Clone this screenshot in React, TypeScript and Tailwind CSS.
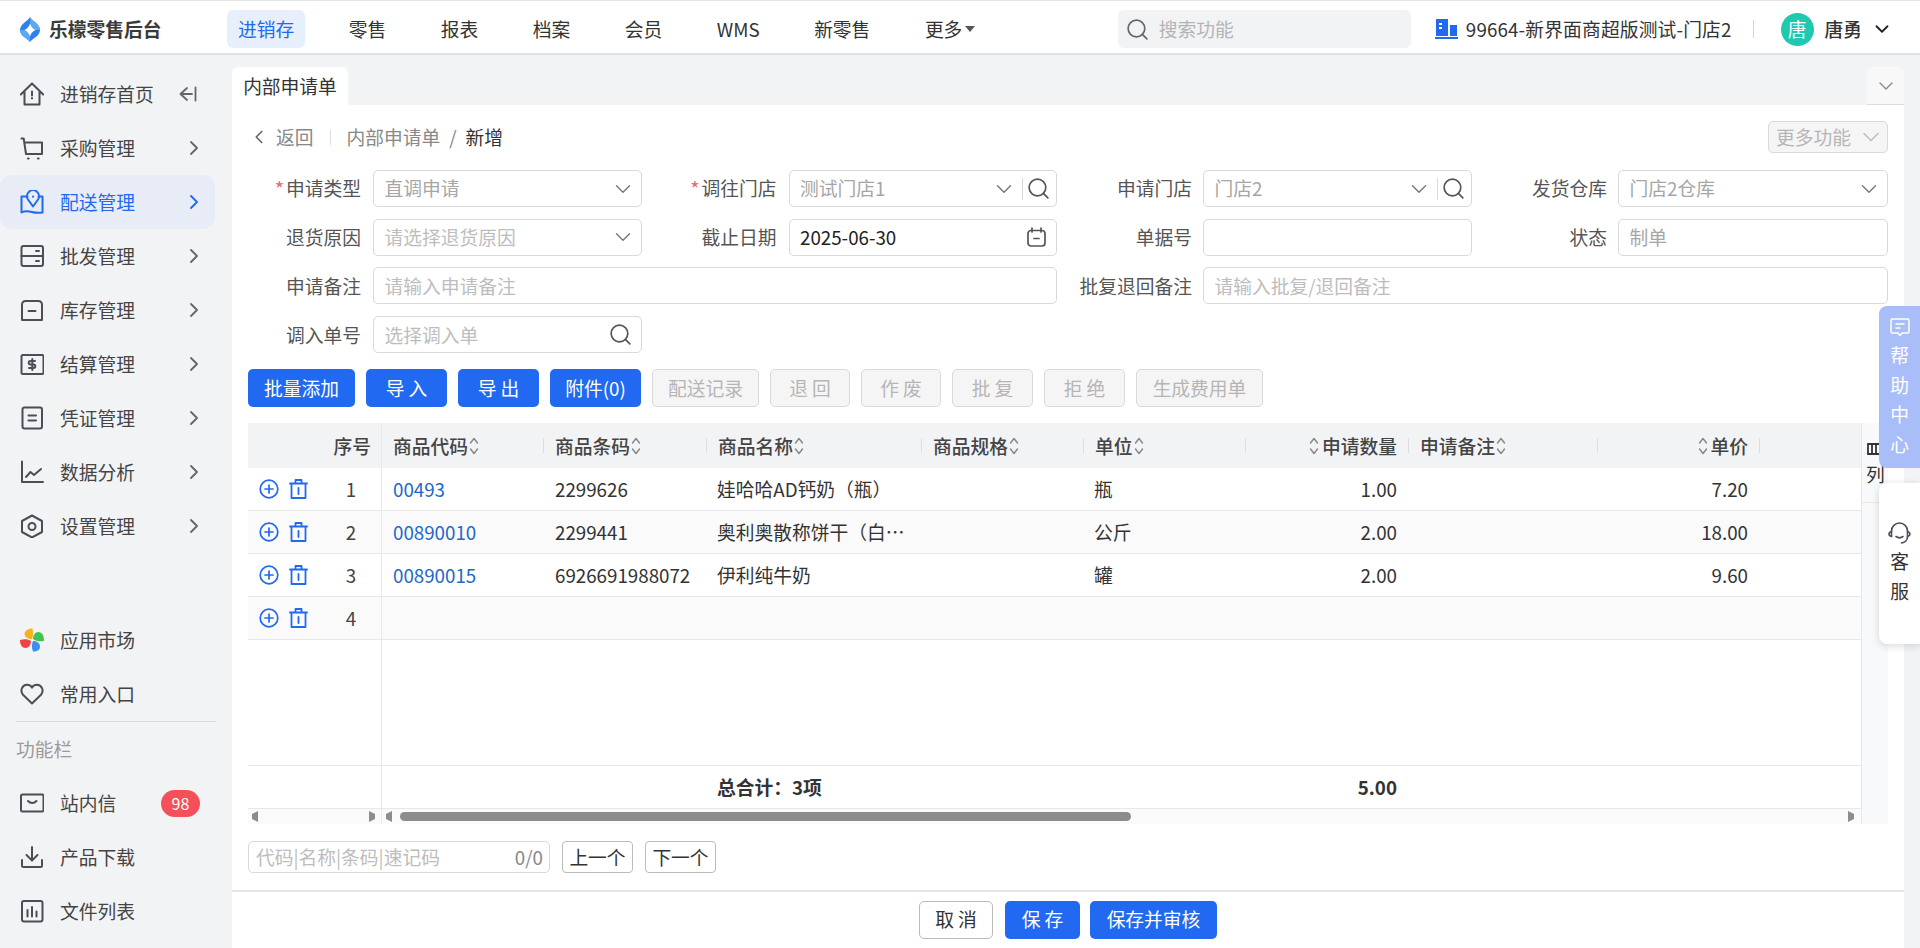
import type { ReactNode } from "react";
import { ChevronDown, ChevronRight, ChevronLeft, Search } from "lucide-react";

const BLUE = "#2169f0";

function Ico({ children, size = 24, color = "#4b4e57", width = 2 }: { children: ReactNode; size?: number; color?: string; width?: number }) {
  return (
    <svg width={size} height={size} viewBox="0 0 24 24" fill="none" stroke={color} strokeWidth={width} strokeLinecap="round" strokeLinejoin="round" className="shrink-0">
      {children}
    </svg>
  );
}

const HomeIcon = () => (
  <Ico>
    <path d="M.8 12.500 12 1.500l11.200 11M4.500 9.500v13h15v-13" />
    <path d="M12 9.500v4M12 16v.4" />
  </Ico>
);
const CartIcon = () => (
  <Ico>
    <path d="M1.500 2.500h2.200L6 18h16V6.500H5" />
    <path d="M8 22.500h.6M18 22.500h.6" strokeWidth={2.200} />
  </Ico>
);
const MapIcon = () => (
  <Ico color={BLUE}>
    <path d="M7.500 6.500H1.500v16c3-1.800 6-1.800 10.500-.5s7.500 1 10.500.5v-16h-4" />
    <path d="M13 16.500 8 9.500a6 6 0 1 1 10 0z" />
    <path d="M13 6.500v.3" />
  </Ico>
);
const WholesaleIcon = () => (
  <Ico>
    <rect x="1.500" y="2" width="21.500" height="20" rx="2" />
    <path d="M1.500 12h21.500M16 7h3M16 17h3" />
  </Ico>
);
const StockIcon = () => (
  <Ico>
    <path d="M2 22V6.500A3.500 3.500 0 0 1 5.500 3h13A3.500 3.500 0 0 1 22 6.500V22z" />
    <path d="M8.500 13h7" />
  </Ico>
);
const SettleIcon = () => (
  <Ico>
    <rect x="1.500" y="3" width="22" height="19" rx="1.500" />
    <path d="M15 9h-4.500a1.700 1.700 0 0 0 0 3.500h3a1.700 1.700 0 0 1 0 3.500H9M12.300 7v11" />
  </Ico>
);
const VoucherIcon = () => (
  <Ico>
    <rect x="2.500" y="1.500" width="19.500" height="21" rx="2" />
    <path d="M8.500 9.500h7.500M8.500 14.500h7.500" />
  </Ico>
);
const ChartIcon = () => (
  <Ico>
    <path d="M2 1.500V22h21" />
    <path d="M6 17l4.500-5 3.500 3 7-6" />
  </Ico>
);
const GearIcon = () => (
  <Ico>
    <path d="M12 1.500 22 7v11l-10 5.500L2 18V7z" />
    <circle cx="12" cy="12.500" r="3.500" />
  </Ico>
);
const HeartIcon = () => (
  <Ico>
    <path d="M12 21.500 3 12.800C-.5 8.500 2.500 2.800 7 2.800c2.200 0 3.900 1 5 2.800 1.100-1.800 2.800-2.800 5-2.800 4.500 0 7.500 5.700 4 10z" />
  </Ico>
);
const MailIcon = () => (
  <Ico>
    <rect x="1" y="3.500" width="22.500" height="17" rx="1.500" />
    <path d="M8 10c2.500 2.500 6 2.500 8.500 0" />
  </Ico>
);
const DownloadIcon = () => (
  <Ico>
    <path d="M12 2v13M6.500 10l5.500 5.500 5.500-5.500M2 15v5.500a1.500 1.500 0 0 0 1.500 1.500h17a1.500 1.500 0 0 0 1.500-1.500V15" />
  </Ico>
);
const FileIcon = () => (
  <Ico>
    <rect x="2" y="2" width="20.500" height="20.500" rx="2" />
    <path d="M7.500 11v6.500M12 8v9.500M16.500 12.500v5" />
  </Ico>
);

function AppMarketIcon() {
  return (
    <svg width="24" height="24" viewBox="0 0 24 24" className="shrink-0">
      <path d="M12 11C8 11 4.500 9 4.500 6c0-3 3-5.500 8-5.500C13 4 13.500 8 12 11z" fill="#f7b21b" />
      <path d="M13 11c0-3.500 2-7 5.500-7 3.500 0 5.500 3.500 5.500 9-4 .5-8 .5-11-2z" fill="#3fc352" />
      <path d="M13 13c3.500 0 7 2 7 5.500S17.500 23.500 13 23.500c-1.500-3.500-1.500-7.500 0-10.500z" fill="#3d8df5" />
      <path d="M11 13c0 3.500-2 7-5.500 7C2 20 0 16.500 0 12c4-1 8-1 11 1z" fill="#ee4342" />
    </svg>
  );
}

function Sort() {
  return (
    <svg width="10" height="20" viewBox="0 0 10 20" fill="none" stroke="#858585" strokeWidth="1.400" strokeLinecap="round" strokeLinejoin="round" className="shrink-0">
      <path d="M1.500 7 5 2.500 8.500 7M1.500 13 5 17.500 8.500 13" />
    </svg>
  );
}

function Triangle({ dir }: { dir: "l" | "r" }) {
  return (
    <svg width="7" height="11" viewBox="0 0 7 11" className="shrink-0" fill="#8c8c8c">
      <path d={dir === "l" ? "M7 0v11L1 8V3z" : "M0 0v11l6-3V3z"} />
    </svg>
  );
}

const navItems = ["零售", "报表", "档案", "会员", "WMS", "新零售"];

const menuTop: [ReactNode, string][] = [
  [<CartIcon />, "采购管理"],
  [<MapIcon />, "配送管理"],
  [<WholesaleIcon />, "批发管理"],
  [<StockIcon />, "库存管理"],
  [<SettleIcon />, "结算管理"],
  [<VoucherIcon />, "凭证管理"],
  [<ChartIcon />, "数据分析"],
  [<GearIcon />, "设置管理"],
];

function Header() {
  return (
    <header className="h-[55px] shrink-0 flex items-center pt-1 bg-white border-t border-t-[#e3e3e3] border-b-2 border-b-[#e0e1e3] text-[18.75px] text-[#333]">
      <div className="w-[227px] shrink-0 flex items-center pl-5 gap-[9px]">
        <svg width="20" height="25" viewBox="0 0 20 25">
          <path d="M10 0c2 4 10 7 10 13 0 6-7 8-10 12C7 21 0 19 0 13 0 7 8 4 10 0z" fill="#2f80ed" />
          <path d="M10 0c2 4 10 7 10 13H10z" fill="#5aa9f5" />
          <path d="M0 13c0 6 7 8 10 12V13z" fill="#5aa9f5" />
          <path d="M10 6.500c.8 3 3 5.700 5.500 6.500-2.500.8-4.700 3.500-5.500 6.500-.8-3-3-5.700-5.500-6.500 2.500-.8 4.700-3.500 5.500-6.500z" fill="#fff" />
        </svg>
        <span className="font-bold text-[18.75px] text-[#3a3a3a] whitespace-nowrap">乐檬零售后台</span>
      </div>
      <nav className="flex items-center gap-[32.500px]">
        <div className="h-[38px] px-[11px] flex items-center rounded-[6px] bg-[#e8effc] text-[#2169f0]">进销存</div>
        {navItems.map((n) => (
          <div key={n} className="px-[11px] whitespace-nowrap">{n}</div>
        ))}
        <div className="px-[11px] flex items-center gap-[3px] whitespace-nowrap">
          更多
          <svg width="10" height="6" viewBox="0 0 10 6" fill="#555"><path d="M0 0h10L5 6z" /></svg>
        </div>
      </nav>
      <div className="ml-auto flex items-center pr-[27px]">
        <div className="w-[293px] h-[38px] rounded-[6px] bg-[#f2f3f5] flex items-center pl-[7px] gap-[9px] text-[#b4b4b4]">
          <Search size={25} strokeWidth={1.600} color="#666" />
          搜索功能
        </div>
        <svg width="23" height="20" viewBox="0 0 23 20" className="ml-[24px]" fill={BLUE}>
          <path d="M1 0h12v17H1zM15 6h7v11h-7zM0 18h23v2H0z" />
          <path d="M4 4h3v2H4zM4 8h3v2H4z" fill="#fff" />
        </svg>
        <span className="ml-2 whitespace-nowrap tracking-[0.15px]">99664-新界面商超版测试-门店2</span>
        <span className="w-px h-[18px] bg-[#d5d5d5] ml-[21px]" />
        <div className="ml-[27px] w-[33px] h-[33px] rounded-full bg-[#1ec9b0] text-white flex items-center justify-center">唐</div>
        <span className="ml-[11px] font-medium whitespace-nowrap">唐勇</span>
        <ChevronDown size={22} strokeWidth={2} color="#222" className="ml-[9px]" />
      </div>
    </header>
  );
}

function MenuRow({ icon, label, active, tail }: { icon: ReactNode; label: string; active?: boolean; tail?: ReactNode }) {
  return (
    <div className={`w-[215px] h-[54px] flex items-center pl-5 pr-[9px] gap-4 rounded-[12px] ${active ? "bg-[#e8ecf6] text-[#2169f0]" : "text-[#444]"}`}>
      {icon}
      <span className="whitespace-nowrap">{label}</span>
      <span className="ml-auto flex items-center">{tail}</span>
    </div>
  );
}

function Sidebar() {
  return (
    <aside className="w-[232px] shrink-0 bg-[#f2f3f5] pt-3 flex flex-col text-[18.75px]">
      <MenuRow
        icon={<HomeIcon />}
        label="进销存首页"
        tail={
          <svg width="18" height="16" viewBox="0 0 18 16" fill="none" stroke="#666" strokeWidth="1.800" strokeLinecap="round" strokeLinejoin="round" className="mr-[9px]">
            <path d="M8 2 1.500 8 8 14M1.500 8H13M16.500 1.500v13" />
          </svg>
        }
      />
      {menuTop.map(([icon, label], i) => (
        <MenuRow
          key={label}
          icon={icon}
          label={label}
          active={i === 1}
          tail={<ChevronRight size={24} strokeWidth={1.800} color={i === 1 ? BLUE : "#666"} />}
        />
      ))}
      <div className="mt-[60px]">
        <MenuRow icon={<AppMarketIcon />} label="应用市场" />
        <MenuRow icon={<HeartIcon />} label="常用入口" />
      </div>
      <div className="ml-4 w-[200px] h-px bg-[#d9dadc]" />
      <div className="h-[54px] pl-4 flex items-center text-[#9a9a9a]">功能栏</div>
      <MenuRow
        icon={<MailIcon />}
        label="站内信"
        tail={<span className="w-[39px] h-[27px] mr-[6px] rounded-full bg-[#f5505a] text-white text-[16px] flex items-center justify-center">98</span>}
      />
      <MenuRow icon={<DownloadIcon />} label="产品下载" />
      <MenuRow icon={<FileIcon />} label="文件列表" />
    </aside>
  );
}

function Label({ children, req, far }: { children: ReactNode; req?: boolean; far?: boolean }) {
  return (
    <div className={`flex items-center justify-end text-[#555] whitespace-nowrap ${far ? "pr-[11px]" : "pr-3"}`}>
      {req && <span className="text-[#ec6670] text-[20px] mr-[2px]">*</span>}
      {children}
    </div>
  );
}

function Field({ text, tone = "ph", chevron, lookup, icon, className = "" }: { text?: string; tone?: "ph" | "dis" | "val"; chevron?: boolean; lookup?: boolean; icon?: ReactNode; className?: string }) {
  const toneClass = tone === "val" ? "text-[#222]" : tone === "dis" ? "text-[#a6a6a6]" : "text-[#bdbdbd]";
  return (
    <div className={`h-[37px] rounded-[5px] border border-[#d9d9d9] bg-white flex items-center pl-[10.500px] pr-[5px] whitespace-nowrap ${toneClass} ${className}`}>
      <span>{text}</span>
      <span className="ml-auto flex items-center">
        {chevron && <ChevronDown size={26} strokeWidth={1.300} color="#777" />}
        {lookup && (
          <>
            <span className="w-px h-[22px] bg-[#d9d9d9] ml-[5px] mr-[3px]" />
            <Search size={25} strokeWidth={1.600} color="#555" />
          </>
        )}
        {icon}
      </span>
    </div>
  );
}

function FormGrid() {
  return (
    <div className="mt-[17px] grid grid-cols-[125px_269px_146.500px_268.500px_146px_269px_146px_270px] auto-rows-[37px] gap-y-[11.700px]">
      <Label req>申请类型</Label>
      <Field text="直调申请" tone="dis" chevron />
      <Label req>调往门店</Label>
      <Field text="测试门店1" tone="dis" chevron lookup />
      <Label far>申请门店</Label>
      <Field text="门店2" tone="dis" chevron lookup />
      <Label far>发货仓库</Label>
      <Field text="门店2仓库" tone="dis" chevron />

      <Label>退货原因</Label>
      <Field text="请选择退货原因" chevron />
      <Label>截止日期</Label>
      <Field
        text="2025-06-30"
        tone="val"
        icon={
          <svg width="19" height="20" viewBox="0 0 19 20" fill="none" stroke="#555" strokeWidth="1.700" strokeLinecap="round" className="mr-[5px]">
            <rect x="1" y="3.500" width="17" height="15.500" rx="3" />
            <path d="M5 1v4M14 1v4M7 11.500h5" />
          </svg>
        }
      />
      <Label far>单据号</Label>
      <Field />
      <Label far>状态</Label>
      <Field text="制单" tone="dis" />

      <Label>申请备注</Label>
      <Field text="请输入申请备注" className="col-span-3" />
      <Label far>批复退回备注</Label>
      <Field text="请输入批复/退回备注" className="col-span-3" />

      <Label>调入单号</Label>
      <Field text="选择调入单" icon={<Search size={25} strokeWidth={1.600} color="#555" className="mr-[3px]" />} />
    </div>
  );
}

const actionBtns: [string, string, boolean][] = [
  ["批量添加", "w-[107px]", true],
  ["导 入", "w-[81px]", true],
  ["导 出", "w-[81px]", true],
  ["附件(0)", "w-[91px]", true],
  ["配送记录", "w-[107px]", false],
  ["退 回", "w-[80px]", false],
  ["作 废", "w-[80px]", false],
  ["批 复", "w-[81px]", false],
  ["拒 绝", "w-[81px]", false],
  ["生成费用单", "w-[127px]", false],
];

function Actions() {
  return (
    <div className="mt-4 flex gap-[11px]">
      {actionBtns.map(([t, w, on]) => (
        <div
          key={t}
          className={`${w} h-[38px] rounded-[5px] flex items-center justify-center whitespace-nowrap ${on ? "bg-[#2169f0] text-white" : "bg-[#f5f5f5] border border-[#d9d9d9] text-[#b5b5b5]"}`}
        >
          {t}
        </div>
      ))}
    </div>
  );
}

const COLS = "grid grid-cols-[134px_161px_163px_215px_162px_162px_163px_189px_162px_102px]";

function HeadCell({ text, right, first }: { text: string; right?: boolean; first?: boolean }) {
  return (
    <div className="flex items-center h-full">
      {!first && <span className="w-px h-[15px] bg-[#dddee0]" />}
      {right ? (
        <div className="ml-auto flex items-center gap-[3px] pr-[11px]">
          <Sort />
          <span className="whitespace-nowrap">{text}</span>
        </div>
      ) : (
        <div className="flex items-center gap-[1px] ml-[11px]">
          <span className="whitespace-nowrap">{text}</span>
          <Sort />
        </div>
      )}
    </div>
  );
}

const rows = [
  { n: 1, code: "00493", bar: "2299626", name: "娃哈哈AD钙奶（瓶）", unit: "瓶", qty: "1.00", price: "7.20" },
  { n: 2, code: "00890010", bar: "2299441", name: "奥利奥散称饼干（白…", unit: "公斤", qty: "2.00", price: "18.00" },
  { n: 3, code: "00890015", bar: "6926691988072", name: "伊利纯牛奶", unit: "罐", qty: "2.00", price: "9.60" },
  { n: 4, code: "", bar: "", name: "", unit: "", qty: "", price: "" },
];

function RowTools({ n }: { n: number }) {
  return (
    <div className="flex items-center h-full border-r border-[#e8e8e8]">
      <svg width="20" height="20" viewBox="0 0 20 20" fill="none" stroke={BLUE} strokeWidth="1.700" strokeLinecap="round" className="ml-[11px]">
        <circle cx="10" cy="10" r="8.800" />
        <path d="M10 6v8M6 10h8" />
      </svg>
      <svg width="19" height="20" viewBox="0 0 19 20" fill="none" stroke={BLUE} strokeWidth="1.800" strokeLinecap="round" strokeLinejoin="round" className="ml-[10px]">
        <path d="M1 4.500h17M2.500 4.500V19h14V4.500M6.500 4V1h6v3M9.500 9v6" />
      </svg>
      <span className="ml-auto w-[60px] text-center text-[#444]">{n}</span>
    </div>
  );
}

function GoodsTable() {
  return (
    <div className="mt-4 flex h-[401px]">
      <div className="w-[1613px] shrink-0 flex flex-col">
        <div className={`${COLS} h-[45px] shrink-0 bg-[#f2f3f5] font-medium text-[#444]`}>
          <div className="flex items-center justify-end pr-[10px] border-r border-[#e8e8e8]">序号</div>
          <HeadCell text="商品代码" first />
          <HeadCell text="商品条码" />
          <HeadCell text="商品名称" />
          <HeadCell text="商品规格" />
          <HeadCell text="单位" />
          <HeadCell text="申请数量" right />
          <HeadCell text="申请备注" />
          <HeadCell text="单价" right />
          <div className="flex items-center"><span className="w-px h-[15px] bg-[#dddee0]" /></div>
        </div>
        {rows.map((r) => (
          <div key={r.n} className={`${COLS} h-[43px] shrink-0 border-b border-[#e8e8e8] text-[#333] ${r.n % 2 === 0 ? "bg-[#fafafa]" : "bg-white"}`}>
            <RowTools n={r.n} />
            <div className="pl-[11px] flex items-center text-[#2169c8]">{r.code}</div>
            <div className="pl-3 flex items-center">{r.bar}</div>
            <div className="pl-[11px] flex items-center whitespace-nowrap">{r.name}</div>
            <div />
            <div className="pl-[11px] flex items-center">{r.unit}</div>
            <div className="pr-[11px] flex items-center justify-end">{r.qty}</div>
            <div />
            <div className="pr-[11px] flex items-center justify-end">{r.price}</div>
            <div />
          </div>
        ))}
        <div className="flex-1 flex">
          <div className="w-[134px] border-r border-[#e8e8e8]" />
        </div>
        <div className={`${COLS} h-[44px] shrink-0 border-t border-b border-[#e8e8e8] font-bold text-[#333]`}>
          <div className="border-r border-[#e8e8e8]" />
          <div />
          <div />
          <div className="pl-[11px] flex items-center whitespace-nowrap">总合计：3项</div>
          <div />
          <div />
          <div className="pr-[11px] flex items-center justify-end">5.00</div>
        </div>
        <div className="h-[15px] shrink-0 bg-[#fafafa] flex items-center">
          <div className="w-[134px] h-full flex items-center justify-between pl-[3px] pr-[5px] border-r border-[#e8e8e8]">
            <Triangle dir="l" />
            <Triangle dir="r" />
          </div>
          <div className="flex-1 flex items-center pl-[3px] pr-[6px]">
            <Triangle dir="l" />
            <div className="ml-[8px] w-[731px] h-[9px] rounded-full bg-[#8c8c8c]" />
            <span className="ml-auto"><Triangle dir="r" /></span>
          </div>
        </div>
      </div>
      <div className="w-[27px] bg-[#f8f9fb] border-l border-[#e6e7e9] flex flex-col">
        <div className="h-[80px] border-b border-[#e8e8e8] pl-[4px] pt-[20px] text-[#333]">
          <svg width="14" height="12" viewBox="0 0 14 12" fill="none" stroke="#333" strokeWidth="1.800" className="ml-[1px]"><path d="M1 1h12v10H1zM5 1v10M9 1v10" /></svg>
          <div className="mt-[6px] whitespace-nowrap leading-[26px]">列</div>
        </div>
      </div>
    </div>
  );
}

function Locator() {
  const btn = "w-[71px] h-[32px] rounded-[4px] border border-[#bbb] flex items-center justify-center text-[#333]";
  return (
    <div className="mt-[17px] flex items-center gap-3">
      <div className="w-[302px] h-[32px] rounded-[5px] border border-[#d9d9d9] flex items-center justify-between pl-[7px] pr-[6px] text-[#bdbdbd]">
        <span>代码|名称|条码|速记码</span>
        <span className="text-[#888]">0/0</span>
      </div>
      <div className={btn}>上一个</div>
      <div className={btn}>下一个</div>
    </div>
  );
}

function Footer() {
  return (
    <div className="mt-[17px] flex-1 border-t-2 border-[#e6e6e6] flex items-center justify-center pb-[1px]">
      <div className="w-[74px] h-[38px] rounded-[5px] border border-[#bbb] flex items-center justify-center text-[#333]">取 消</div>
      <div className="ml-[12px] w-[75px] h-[38px] rounded-[5px] bg-[#2169f0] text-white flex items-center justify-center">保 存</div>
      <div className="ml-[10px] w-[127px] h-[38px] rounded-[5px] bg-[#2169f0] text-white flex items-center justify-center whitespace-nowrap">保存并审核</div>
    </div>
  );
}

export default function App() {
  return (
    <div className="relative h-[948px] w-full overflow-hidden flex flex-col bg-[#f2f3f5] font-['Noto_Sans_CJK_SC','Noto_Sans',sans-serif] text-[18.75px]">
      <Header />
      <div className="flex-1 flex min-h-0">
        <Sidebar />
        <main className="w-[1672px] shrink-0 flex flex-col">
          <div className="mt-3 h-[38px] shrink-0 flex justify-between">
            <div className="w-[116px] rounded-t-[6px] bg-white flex items-center justify-center text-[#333] whitespace-nowrap">内部申请单</div>
            <div className="w-[37px] rounded-t-[6px] bg-[#f8f8f9] border-b border-[#dcdcdc] flex items-center justify-center">
              <ChevronDown size={24} strokeWidth={1.400} color="#888" />
            </div>
          </div>
          <section className="flex-1 bg-white px-4 pt-4 flex flex-col min-h-0">
            <div className="h-[32px] flex items-center">
              <ChevronLeft size={22} strokeWidth={1.800} color="#666" />
              <span className="ml-[6px] text-[#888]">返回</span>
              <span className="ml-[16px] w-px h-[15px] bg-[#ddd]" />
              <span className="ml-[16px] text-[#888]">内部申请单</span>
              <span className="ml-[9px] text-[#888]">/</span>
              <span className="ml-[9px] text-[#333]">新增</span>
              <div className="ml-auto w-[120px] h-[32px] rounded-[5px] bg-[#f5f5f5] border border-[#d9d9d9] flex items-center pl-[7px] gap-[6px] text-[#b5b5b5] whitespace-nowrap">
                更多功能
                <ChevronDown size={28} strokeWidth={1.200} color="#bbb" className="shrink-0" />
              </div>
            </div>
            <FormGrid />
            <Actions />
            <GoodsTable />
            <Locator />
            <div className="-mx-4 flex-1 flex flex-col">
              <Footer />
            </div>
          </section>
        </main>
      </div>

      <div className="absolute right-0 top-[306px] w-[41px] h-[162px] rounded-l-[8px] bg-[#a9bdf9] text-white flex flex-col items-center pt-[12px]">
        <svg width="20" height="19" viewBox="0 0 20 19" fill="none" stroke="#fff" strokeWidth="1.500" strokeLinecap="round" strokeLinejoin="round" className="mb-[3px]">
          <path d="M1 2.500A1.500 1.500 0 0 1 2.500 1h15A1.500 1.500 0 0 1 19 2.500v11a1.500 1.500 0 0 1-1.500 1.500H12l-2 2.500L8 15H2.500A1.500 1.500 0 0 1 1 13.500z" />
          <path d="M6 6h8M6 10h4" />
        </svg>
        {["帮", "助", "中", "心"].map((c) => (
          <span key={c} className="h-[29.500px] leading-[29.500px]">{c}</span>
        ))}
      </div>
      <div className="absolute right-0 top-[483px] w-[41px] h-[161px] rounded-l-[8px] bg-white shadow-[0_2px_8px_rgba(0,0,0,0.15)] text-[#333] flex flex-col items-center pt-[39px]">
        <svg width="23" height="23" viewBox="0 0 23 23" fill="none" stroke="#4b4e57" strokeWidth="1.600" strokeLinecap="round" className="mb-[1px]">
          <path d="M3.500 14V9a8 8 0 0 1 16 0v6c0 3-2.500 5.500-6 6" />
          <path d="M3.500 9.500C1.500 10 1 11 1 12s.5 2 2.500 2.500M19.500 9.500c1.500.5 2.500 1.500 2.500 2.500s-1 2-2.500 2.500M8 14.500c2 1.500 5 1.500 7 0" />
        </svg>
        {["客", "服"].map((c) => (
          <span key={c} className="h-[29.500px] leading-[29.500px]">{c}</span>
        ))}
      </div>
    </div>
  );
}
